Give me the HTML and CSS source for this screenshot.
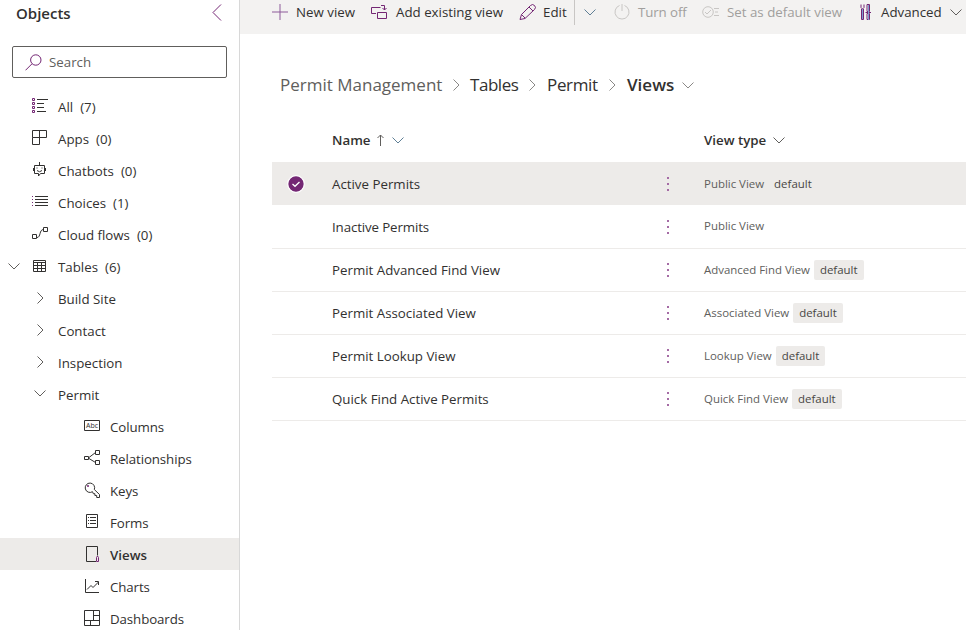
FILE: index.html
```html
<!DOCTYPE html>
<html lang="en">
<head>
<meta charset="utf-8">
<title>Permit Views</title>
<link rel="stylesheet" href="styles.css">
</head>
<body>
<svg class="defs" width="0" height="0">
  <symbol id="down" viewBox="0 0 12 7"><path d="M.5.5 6 6 11.5.5"/></symbol>
  <symbol id="right" viewBox="0 0 7 12"><path d="M.5.5 6 6 .5 11.5"/></symbol>
</svg>
<div class="app">
  <aside class="sidebar">
    <header class="side-head"><h2>Objects</h2><svg class="collapse" width="10" height="17" viewBox="0 0 10 17"><path d="M9 .5 1 8.5l8 8"/></svg></header>
    <div class="search">
      <svg class="purple" width="17" height="17" viewBox="0 0 17 17"><circle cx="10.8" cy="6" r="5.2"/><path d="m7 9.8-6.5 6.5"/></svg>
      <span>Search</span>
    </div>
    <nav class="tree">
      <div class="node"><i class="twist"></i><svg class="ico" width="16" height="16" viewBox="0 0 16 16"><path class="pur" d="M.5.5h2v2h-2zM.5 4.5h2v2h-2zM.5 8.500h2v2h-2zM.5 12.500h2v2h-2z"/><path d="M5 1.500h11M5 5.500h7M5 9.500h7M5 13.500h9"/></svg><span>All</span><span>(7)</span></div>
      <div class="node"><i class="twist"></i><svg class="ico" width="16" height="16" viewBox="0 0 16 16"><path d="M.5.5h14v7H.5zM7.500.5v14M.5 7.500v7h7"/></svg><span>Apps</span><span>(0)</span></div>
      <div class="node"><i class="twist"></i><svg class="ico" width="16" height="16" viewBox="0 0 16 16"><path d="M7.500 0v3M2.500 3.500h10v8h-4l-2 2.500v-2.500h-4zM1.500 6v3M13.500 6v3M5 8.500q2.500 2.500 5 0M5 5.500v1M10 5.500v1"/></svg><span>Chatbots</span><span>(0)</span></div>
      <div class="node"><i class="twist"></i><svg class="ico" width="16" height="16" viewBox="0 0 16 16"><path d="M3 2.500h13M3 5.500h13M3 8.500h13M3 11.500h13"/><path class="pur" d="M0 2.500h1M0 5.500h1M0 8.500h1M0 11.500h1"/></svg><span>Choices</span><span>(1)</span></div>
      <div class="node"><i class="twist"></i><svg class="ico" width="16" height="16" viewBox="0 0 16 16"><path d="M.5 8.500h4v4h-4zM11.500 1.500h4v4h-4zM5 11.500c4 0 2-8 6.500-8"/></svg><span>Cloud flows</span><span>(0)</span></div>
      <div class="node"><i class="twist"><svg width="12" height="7"><use href="#down"/></svg></i><svg class="ico" width="16" height="16" viewBox="0 0 16 16"><path d="M1.500 2.500h12v11h-12zM1.500 4.500h12M1.500 7.500h12M1.500 10.500h12M5.500 4.500v9M9.500 4.500v9"/></svg><span>Tables</span><span>(6)</span></div>
      <div class="node"><i class="twist"></i><i class="branch"><svg width="7" height="12"><use href="#right"/></svg></i><span>Build Site</span></div>
      <div class="node"><i class="twist"></i><i class="branch"><svg width="7" height="12"><use href="#right"/></svg></i><span>Contact</span></div>
      <div class="node"><i class="twist"></i><i class="branch"><svg width="7" height="12"><use href="#right"/></svg></i><span>Inspection</span></div>
      <div class="node"><i class="twist"></i><i class="branch"><svg width="12" height="7"><use href="#down"/></svg></i><span>Permit</span></div>
      <div class="node leaf"><svg class="ico" width="16" height="16" viewBox="0 0 16 16"><path d="M.5 2.500h15v10H.5z"/><text class="abc" x="2" y="10.200" textLength="12">Abc</text></svg><span>Columns</span></div>
      <div class="node leaf"><svg class="ico" width="16" height="16" viewBox="0 0 16 16"><path d="M.5 6.500h4v3h-4zM11.500.5h4v4h-4zM11.500 10.500h4v4h-4zM5 7.500l6.500-5M5 8.500l6.500 4"/></svg><span>Relationships</span></div>
      <div class="node leaf"><svg class="ico" width="16" height="16" viewBox="0 0 16 16"><path d="M8.500 9.700a4.700 4.700 0 1 1 1.800-2.200l5.200 5v3h-2.800v-2h-1.800v-1.800H9.300z"/><path class="pur" d="M3.500 3.500h1v1h-1z"/></svg><span>Keys</span></div>
      <div class="node leaf"><svg class="ico" width="16" height="16" viewBox="0 0 16 16"><path d="M2.500.5h11v13h-11zM6 3.500h6M6 6.500h6M6 9.500h6M4 3.500h1M4 6.500h1M4 9.500h1"/></svg><span>Forms</span></div>
      <div class="node leaf current"><svg class="ico" width="16" height="16" viewBox="0 0 16 16"><path d="M12 15.500H2.500V.5h11v9"/><path class="pur" d="M12.500 15.500v-4l1-1.500 1 1.500v4z"/></svg><span>Views</span></div>
      <div class="node leaf"><svg class="ico" width="16" height="16" viewBox="0 0 16 16"><path d="M1.500 1v13.500H15M3 11.500l4-4 2 2 5.500-5.500M11 3.500h3.500V7"/></svg><span>Charts</span></div>
      <div class="node leaf"><svg class="ico" width="16" height="16" viewBox="0 0 16 16"><path d="M.5.5h15v15H.5zM9.500.5v10M.5 10.500h15M9.500 5.500h6M6.500 10.500v5"/></svg><span>Dashboards</span></div>
    </nav>
  </aside>
  <main class="main">
    <div class="toolbar">
      <button class="cmd c-new"><svg class="pale" width="16" height="16" viewBox="0 0 16 16"><path d="M0 8h16M8 0v16"/></svg><span>New view</span></button>
      <button class="cmd c-add"><svg width="17" height="16" viewBox="0 0 17 16"><path d="M5 9.500H.5v-6h9M13.500 6V1.500H10M11.500 4l2 2 2-2M6.500 8.500h9v6h-9z"/></svg><span>Add existing view</span></button>
      <button class="cmd c-edit"><svg width="17" height="16" viewBox="0 0 17 16"><path d="m1 15.500 1.500-5 9-9q2-2 4 0t0 4l-9.500 9zM10 3l4 4M2.500 10.500 6 14"/></svg><span>Edit</span></button>
      <button class="split"><svg class="cool" width="12" height="7"><use href="#down"/></svg></button>
      <button class="cmd c-off off"><svg width="16" height="16" viewBox="0 0 16 16"><path d="M8 0v7M5.500 1.500a7 7 0 1 0 5 0"/></svg><span>Turn off</span></button>
      <button class="cmd c-def off"><svg width="17" height="12" viewBox="0 0 17 12"><circle cx="6" cy="6" r="5.300"/><path d="m3 6 2 2 4-4M12 2.500h5M13 6h3M12 9.500h5"/></svg><span>Set as default view</span></button>
      <button class="cmd c-adv"><svg width="11" height="16" viewBox="0 0 11 16"><path d="M1.500 5v10.500h2V5M1 .5v3L2.500 5 4 3.500v-3M7 .5h2.500v7H7zM7 9.500h2.500v6H7zM5.500 8.500H11"/><path class="blue" d="M2.500 5v10M8.500 1v15"/></svg><span>Advanced</span></button>
      <svg width="12" height="7"><use href="#down"/></svg>
    </div>
    <div class="crumbs">
      <span class="root">Permit Management</span><svg width="7" height="12"><use href="#right"/></svg>
      <span class="b-tab">Tables</span><svg width="7" height="12"><use href="#right"/></svg>
      <span class="b-per">Permit</span><svg width="7" height="12"><use href="#right"/></svg>
      <b>Views</b><svg width="12" height="7"><use href="#down"/></svg>
    </div>
    <div class="grid">
      <div class="row head"><i></i><div class="hcell"><span>Name</span><svg class="up" width="7" height="12" viewBox="0 0 7 12"><path d="M3.500 12V1M.5 4l3-3 3 3"/></svg><svg class="cool" width="12" height="7"><use href="#down"/></svg></div><i></i><div class="hcell"><span>View type</span><svg width="12" height="7"><use href="#down"/></svg></div></div>
      <div class="row selected"><svg class="check" width="18" height="18" viewBox="0 0 18 18"><circle cx="9" cy="9" r="8.300"/><path d="m5.500 9 2.500 2.300L12.500 7"/></svg><span>Active Permits</span><svg class="dots" width="2" height="14"><path d="M0 0h2v2H0zM0 6h2v2H0zM0 12h2v2H0z"/></svg><div class="kind"><span>Public View</span><em>default</em></div></div>
      <div class="row"><i></i><span class="snug">Inactive Permits</span><svg class="dots" width="2" height="14"><path d="M0 0h2v2H0zM0 6h2v2H0zM0 12h2v2H0z"/></svg><div class="kind plain"><span>Public View</span></div></div>
      <div class="row"><i></i><span>Permit Advanced Find View</span><svg class="dots" width="2" height="14"><path d="M0 0h2v2H0zM0 6h2v2H0zM0 12h2v2H0z"/></svg><div class="kind"><span>Advanced Find View</span><em>default</em></div></div>
      <div class="row"><i></i><span>Permit Associated View</span><svg class="dots" width="2" height="14"><path d="M0 0h2v2H0zM0 6h2v2H0zM0 12h2v2H0z"/></svg><div class="kind"><span>Associated View</span><em>default</em></div></div>
      <div class="row"><i></i><span>Permit Lookup View</span><svg class="dots" width="2" height="14"><path d="M0 0h2v2H0zM0 6h2v2H0zM0 12h2v2H0z"/></svg><div class="kind"><span>Lookup View</span><em>default</em></div></div>
      <div class="row"><i></i><span>Quick Find Active Permits</span><svg class="dots" width="2" height="14"><path d="M0 0h2v2H0zM0 6h2v2H0zM0 12h2v2H0z"/></svg><div class="kind"><span>Quick Find View</span><em>default</em></div></div>
    </div>
  </main>
</div>
</body>
</html>
```
FILE: styles.css
```css
* { box-sizing: border-box; }
body { margin: 0; background: #fff; color: #323130; font: 13.3px/20px "Open Sans", "Noto Sans", sans-serif; overflow: hidden; }
svg { display: block; flex: none; fill: none; stroke: #605e5c; }
.defs { position: absolute; }
i, em { font-style: normal; }
span, b, h2 { white-space: nowrap; }
button { border: 0; padding: 0; background: none; font: inherit; color: inherit; }
.app { display: flex; width: 966px; height: 630px; }

.sidebar { width: 240px; flex: none; border-right: 1px solid #d8d8d8; overflow: hidden; }
.side-head { display: flex; justify-content: space-between; height: 46px; padding: 4px 17px 0 16px; }
.side-head h2 { margin: -1px 0 0; font-size: 15px; font-weight: 600; line-height: 20px; letter-spacing: 0; }
.collapse { stroke: #742774; }
.search { display: flex; align-items: center; gap: 7px; width: 215px; height: 32px; margin-left: 12px; padding-left: 12px; border: 1px solid #605e5c; border-radius: 2px; color: #605e5c; }
.purple { stroke: #742774; }
.tree { margin-top: 12px; }
.node { display: flex; align-items: center; height: 32px; padding-left: 8px; padding-top: 1px; }
.twist { width: 24px; }
.twist svg { margin-top: -1px; }
.ico { width: 16px; margin: -1px 10px 0 0; stroke: #323130; }
.ico .pur { stroke: #742774; }
.branch { display: flex; justify-content: center; width: 16px; margin: -2px 10px 0 0; }
.node span + span { margin-left: 7px; }
.leaf { padding-left: 84px; letter-spacing: -.1px; }
.current { background: #edebe9; font-weight: 600; letter-spacing: 0; }
.abc { font-size: 7px; fill: #323130; stroke: none; letter-spacing: 0; }

.main { flex: 1; min-width: 0; overflow: hidden; }
.toolbar { display: flex; align-items: center; height: 34px; padding: 0 0 10px 32px; background: #f3f2f1; }
.cmd { display: flex; align-items: center; gap: 8px; flex: none; height: 24px; }
.cmd svg { stroke: #742774; }
.cmd .pale { stroke: #8d5a9a; }
.c-new { width: 99px; }
.c-add { width: 148px; }
.c-edit { width: 55px; gap: 7px; }
.split { display: flex; align-items: center; width: 40px; height: 26px; padding-left: 9px; border-left: 1px solid #c8c6c4; }
.c-off { width: 88px; letter-spacing: -.1px; }
.c-def { width: 158px; }
.c-adv { width: 90px; gap: 10px; }
.cmd.off { color: #a19f9d; }
.cmd.off svg { stroke: #c8c6c4; }
.cmd .blue { stroke: #7d9bd0; }
.cool { stroke: #5f7f95; }

.crumbs { display: flex; align-items: center; height: 24px; margin: 39px 0 0 40px; font-size: 17px; }
.root { width: 173px; color: #605e5c; }
.crumbs svg { stroke: #8a8886; }
.b-tab { width: 59px; margin-left: 10px; letter-spacing: -.45px; }
.b-per { width: 62px; margin-left: 11px; letter-spacing: -.35px; }
.crumbs b { width: 55px; margin-left: 11px; font-weight: 600; letter-spacing: 0; }

.grid { margin: 21px 0 0 32px; }
.row { display: grid; grid-template-columns: 60px 334px 38px 1fr; align-items: center; height: 43px; border-bottom: 1px solid #edebe9; }
.head { height: 44px; border: 0; font-weight: 600; }
.hcell { display: flex; align-items: center; gap: 7px; }
.up { margin-right: 1px; }
.selected { margin-bottom: 1px; border: 0; background: #edebe9; }
.check { margin-left: 15px; fill: #742774; stroke: #fff; stroke-width: 1.300; }
.dots { margin-left: 1px; fill: #a56ba5; stroke: none; }
.snug { letter-spacing: -.12px; }
.kind { display: flex; align-items: center; gap: 4px; font-size: 11.450px; color: #605e5c; }
.selected .kind { padding-top: 1px; }
.plain { padding: 0 0 3px; }
.kind em { height: 20px; padding: 0 6px; border-radius: 2px; background: #edebe9; color: #484644; }
```
